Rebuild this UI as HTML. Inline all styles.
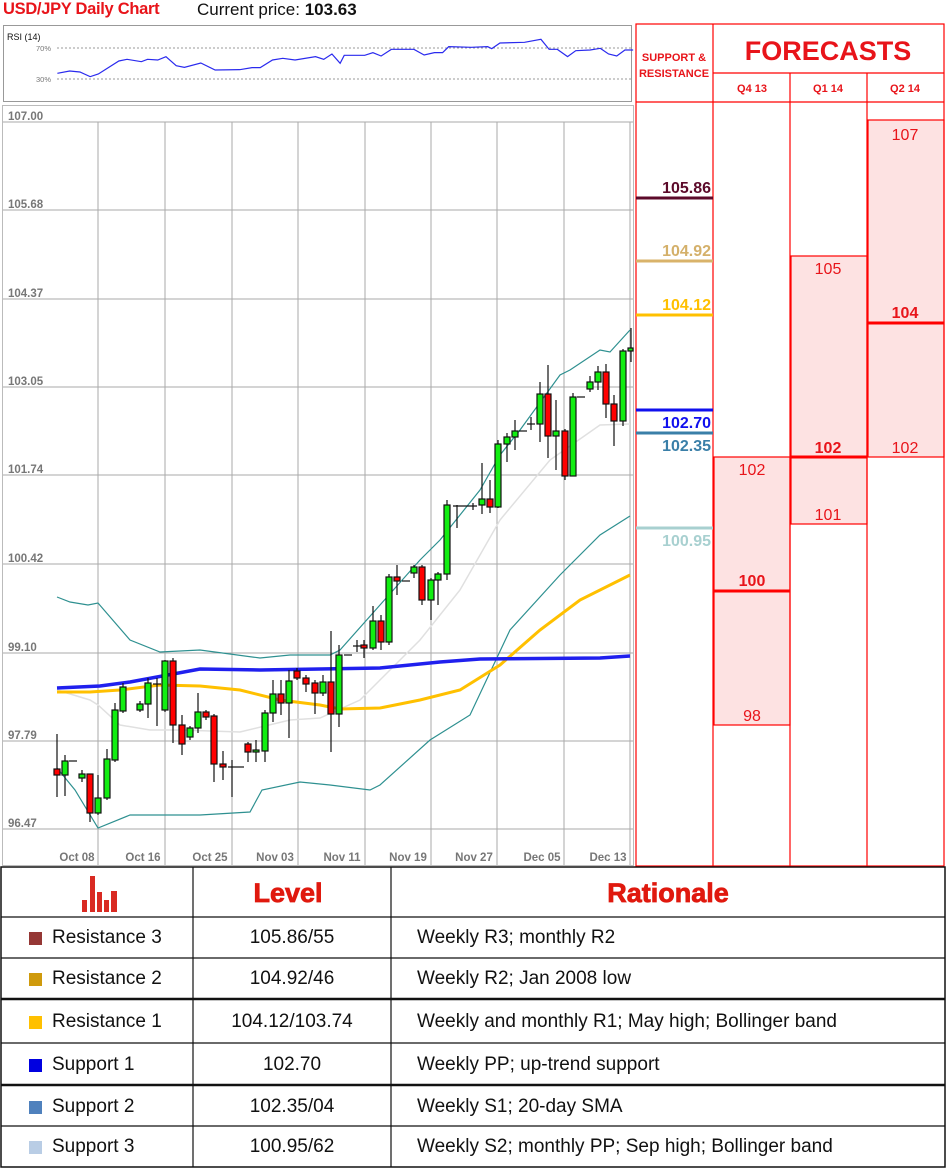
<!DOCTYPE html>
<html><head><meta charset="utf-8"><style>
html,body{margin:0;padding:0;background:#fff;width:949px;height:1169px;overflow:hidden;font-family:"Liberation Sans",sans-serif}
.a{position:absolute}
.t{position:absolute;font-size:19px;color:#111;white-space:nowrap}
.sq{position:absolute;width:13px;height:13px}
</style></head><body>
<div class="a" style="left:3px;top:0;font-size:16.5px;font-weight:bold;color:#e8141a;letter-spacing:-0.3px">USD/JPY Daily Chart</div>
<div class="a" style="left:197px;top:0;font-size:17px;color:#111">Current price: <b>103.63</b></div>

<svg class="a" style="left:0;top:0" width="949" height="870" xmlns="http://www.w3.org/2000/svg" font-family="Liberation Sans, sans-serif">
<!-- RSI -->
<rect x="3.5" y="25.5" width="628" height="76" fill="#fff" stroke="#999"/>
<text x="7" y="40" font-size="9" fill="#111">RSI (14)</text>
<text x="36" y="51" font-size="7.5" fill="#777">70%</text>
<text x="36" y="82" font-size="7.5" fill="#777">30%</text>
<line x1="57" y1="48" x2="631" y2="48" stroke="#777" stroke-dasharray="2,2" stroke-width="0.8"/>
<line x1="57" y1="79" x2="631" y2="79" stroke="#777" stroke-dasharray="2,2" stroke-width="0.8"/>
<g transform="scale(0.4098,0.3333)"><polyline fill="none" stroke="#2a2aee" stroke-width="1.2" vector-effect="non-scaling-stroke" points="140,220 170,213 195,216 220,230 240,222 290,183 310,178 345,185 360,178 385,180 405,170 430,197 450,202 490,189 525,210 585,209 615,203 635,203 665,180 690,175 720,180 770,170 790,178 810,162 830,190 840,166 890,166 910,158 930,168 955,148 1010,148 1035,165 1060,158 1080,158 1095,140 1150,142 1190,140 1200,146 1220,129 1280,127 1320,118 1340,148 1360,148 1385,170 1405,152 1440,150 1465,145 1485,162 1505,168 1525,150 1545,150"/></g>

<!-- main chart -->
<rect x="2.5" y="105.5" width="631" height="760" fill="#fff" stroke="#bbb"/>
<g stroke="#aaa" stroke-width="1">
<line x1="3" y1="122" x2="633" y2="122"/><line x1="3" y1="210" x2="633" y2="210"/><line x1="3" y1="299" x2="633" y2="299"/><line x1="3" y1="387" x2="633" y2="387"/><line x1="3" y1="475" x2="633" y2="475"/><line x1="3" y1="564" x2="633" y2="564"/><line x1="3" y1="653" x2="633" y2="653"/><line x1="3" y1="741" x2="633" y2="741"/><line x1="3" y1="829" x2="633" y2="829"/>
<line x1="98" y1="122" x2="98" y2="865"/><line x1="165" y1="122" x2="165" y2="865"/><line x1="232" y1="122" x2="232" y2="865"/><line x1="298" y1="122" x2="298" y2="865"/><line x1="365" y1="122" x2="365" y2="865"/><line x1="431" y1="122" x2="431" y2="865"/><line x1="497" y1="122" x2="497" y2="865"/><line x1="564" y1="122" x2="564" y2="865"/><line x1="630" y1="122" x2="630" y2="865"/>
</g>
<g font-size="11.5" font-weight="bold" fill="#777">
<text x="8" y="120">107.00</text><text x="8" y="208">105.68</text><text x="8" y="297">104.37</text><text x="8" y="385">103.05</text><text x="8" y="473">101.74</text><text x="8" y="562">100.42</text><text x="8" y="651">99.10</text><text x="8" y="739">97.79</text><text x="8" y="827">96.47</text>
</g>
<g font-size="11.5" font-weight="bold" fill="#777" text-anchor="middle">
<text x="77" y="861">Oct 08</text><text x="143" y="861">Oct 16</text><text x="210" y="861">Oct 25</text><text x="275" y="861">Nov 03</text><text x="342" y="861">Nov 11</text><text x="408" y="861">Nov 19</text><text x="474" y="861">Nov 27</text><text x="542" y="861">Dec 05</text><text x="608" y="861">Dec 13</text>
</g>
<!-- indicators -->
<polyline fill="none" stroke="#e0e0e0" stroke-width="1.5" points="57,690 90,700 98,705 120,725 150,730 180,730 240,732 290,720 320,718 360,700 380,680 420,640 460,590 500,520 550,460 600,425 630,424"/>
<polyline fill="none" stroke="#2e9090" stroke-width="1.2" points="57,597 70,602 88,605 98,603 130,640 160,652 200,650 260,658 290,655 330,655 340,650 380,605 420,560 440,540 480,490 500,455 520,430 560,375 570,370 600,350 610,352 630,330"/>
<polyline fill="none" stroke="#2e9090" stroke-width="1.2" points="57,768 75,790 98,828 130,815 200,815 250,812 262,790 300,782 330,785 370,790 380,785 430,740 470,715 510,630 560,575 600,535 630,516"/>
<polyline fill="none" stroke="#ffc000" stroke-width="3" points="57,692 90,692 120,690 160,685 200,686 240,690 280,700 320,705 340,709 380,708 420,700 460,690 500,665 540,630 580,600 630,575"/>
<polyline fill="none" stroke="#2020ee" stroke-width="3.5" points="57,688 100,686 130,682 200,669 260,670 320,669 380,668 440,662 480,659 600,658 630,656"/>
<!-- candles -->
<g stroke="#111" stroke-width="1.2">
<line x1="57" y1="734" x2="57" y2="797"/><rect x="54" y="769" width="6" height="6" fill="#f00"/>
<line x1="65" y1="755" x2="65" y2="796"/><rect x="62" y="761" width="6" height="14" fill="#1e1"/>
<line x1="69" y1="761" x2="77" y2="761"/>
<line x1="82" y1="770" x2="82" y2="782"/><rect x="79" y="774" width="6" height="4" fill="#1e1"/>
<line x1="90" y1="774" x2="90" y2="822"/><rect x="87" y="774" width="6" height="39" fill="#f00"/>
<line x1="98" y1="775" x2="98" y2="815"/><rect x="95" y="798" width="6" height="15" fill="#1e1"/>
<line x1="107" y1="749" x2="107" y2="800"/><rect x="104" y="759" width="6" height="39" fill="#1e1"/>
<line x1="115" y1="703" x2="115" y2="762"/><rect x="112" y="710" width="6" height="50" fill="#1e1"/>
<line x1="123" y1="683" x2="123" y2="713"/><rect x="120" y="687" width="6" height="24" fill="#1e1"/>
<line x1="140" y1="701" x2="140" y2="712"/><rect x="137" y="704" width="6" height="6" fill="#1e1"/>
<line x1="148" y1="678" x2="148" y2="718"/><rect x="145" y="683" width="6" height="21" fill="#1e1"/>
<line x1="157" y1="678" x2="157" y2="726"/><line x1="153" y1="684" x2="161" y2="684"/>
<line x1="165" y1="660" x2="165" y2="712"/><rect x="162" y="661" width="6" height="49" fill="#1e1"/>
<line x1="173" y1="658" x2="173" y2="743"/><rect x="170" y="661" width="6" height="64" fill="#f00"/>
<line x1="182" y1="715" x2="182" y2="755"/><rect x="179" y="725" width="6" height="19" fill="#f00"/>
<line x1="190" y1="726" x2="190" y2="740"/><rect x="187" y="728" width="6" height="9" fill="#1e1"/>
<line x1="198" y1="693" x2="198" y2="733"/><rect x="195" y="712" width="6" height="16" fill="#1e1"/>
<line x1="206" y1="710" x2="206" y2="720"/><rect x="203" y="712" width="6" height="5" fill="#f00"/>
<line x1="214" y1="714" x2="214" y2="782"/><rect x="211" y="716" width="6" height="48" fill="#f00"/>
<line x1="223" y1="751" x2="223" y2="780"/><rect x="220" y="764" width="6" height="3" fill="#f00"/>
<line x1="232" y1="760" x2="232" y2="797"/><line x1="228" y1="767" x2="236" y2="767"/>
<line x1="236" y1="767" x2="244" y2="767"/>
<line x1="248" y1="742" x2="248" y2="762"/><rect x="245" y="744" width="6" height="8" fill="#f00"/>
<line x1="256" y1="740" x2="256" y2="762"/><rect x="253" y="750" width="6" height="2" fill="#1e1"/>
<line x1="265" y1="710" x2="265" y2="762"/><rect x="262" y="713" width="6" height="38" fill="#1e1"/>
<line x1="273" y1="680" x2="273" y2="722"/><rect x="270" y="694" width="6" height="19" fill="#1e1"/>
<line x1="281" y1="680" x2="281" y2="715"/><rect x="278" y="694" width="6" height="9" fill="#f00"/>
<line x1="289" y1="670" x2="289" y2="738"/><rect x="286" y="681" width="6" height="22" fill="#1e1"/>
<line x1="297" y1="668" x2="297" y2="680"/><rect x="294" y="671" width="6" height="7" fill="#f00"/>
<line x1="306" y1="675" x2="306" y2="692"/><rect x="303" y="678" width="6" height="6" fill="#f00"/>
<line x1="315" y1="680" x2="315" y2="714"/><rect x="312" y="683" width="6" height="10" fill="#f00"/>
<line x1="323" y1="675" x2="323" y2="696"/><rect x="320" y="682" width="6" height="11" fill="#1e1"/>
<line x1="331" y1="631" x2="331" y2="752"/><rect x="328" y="682" width="6" height="32" fill="#f00"/>
<line x1="339" y1="645" x2="339" y2="727"/><rect x="336" y="655" width="6" height="59" fill="#1e1"/>
<line x1="344" y1="655" x2="352" y2="655"/>
<line x1="357" y1="640" x2="357" y2="652"/><line x1="353" y1="646" x2="361" y2="646"/>
<line x1="364" y1="640" x2="364" y2="658"/><rect x="361" y="645" width="6" height="3" fill="#f00"/>
<line x1="373" y1="606" x2="373" y2="650"/><rect x="370" y="621" width="6" height="27" fill="#1e1"/>
<line x1="381" y1="615" x2="381" y2="650"/><rect x="378" y="621" width="6" height="21" fill="#f00"/>
<line x1="389" y1="574" x2="389" y2="645"/><rect x="386" y="577" width="6" height="65" fill="#1e1"/>
<line x1="397" y1="565" x2="397" y2="595"/><rect x="394" y="577" width="6" height="4" fill="#f00"/>
<line x1="402" y1="581" x2="410" y2="581"/>
<line x1="414" y1="565" x2="414" y2="578"/><rect x="411" y="567" width="6" height="6" fill="#1e1"/>
<line x1="422" y1="565" x2="422" y2="605"/><rect x="419" y="567" width="6" height="33" fill="#f00"/>
<line x1="431" y1="578" x2="431" y2="620"/><rect x="428" y="580" width="6" height="20" fill="#1e1"/>
<line x1="438" y1="572" x2="438" y2="605"/><rect x="435" y="574" width="6" height="6" fill="#1e1"/>
<line x1="447" y1="500" x2="447" y2="580"/><rect x="444" y="505" width="6" height="69" fill="#1e1"/>
<line x1="457" y1="505" x2="457" y2="528"/><line x1="453" y1="506" x2="477" y2="506"/>
<line x1="473" y1="503" x2="473" y2="510"/>
<line x1="482" y1="463" x2="482" y2="514"/><rect x="479" y="499" width="6" height="6" fill="#1e1"/>
<line x1="490" y1="480" x2="490" y2="513"/><rect x="487" y="499" width="6" height="8" fill="#f00"/>
<line x1="498" y1="440" x2="498" y2="508"/><rect x="495" y="444" width="6" height="63" fill="#1e1"/>
<line x1="507" y1="433" x2="507" y2="462"/><rect x="504" y="437" width="6" height="7" fill="#1e1"/>
<line x1="515" y1="420" x2="515" y2="450"/><rect x="512" y="431" width="6" height="6" fill="#1e1"/>
<line x1="519" y1="431" x2="527" y2="431"/>
<line x1="531" y1="417" x2="531" y2="430"/><line x1="527" y1="424" x2="535" y2="424"/>
<line x1="540" y1="382" x2="540" y2="442"/><rect x="537" y="394" width="6" height="30" fill="#1e1"/>
<line x1="548" y1="365" x2="548" y2="458"/><rect x="545" y="394" width="6" height="42" fill="#f00"/>
<line x1="556" y1="400" x2="556" y2="470"/><rect x="553" y="431" width="6" height="5" fill="#1e1"/>
<line x1="565" y1="429" x2="565" y2="480"/><rect x="562" y="431" width="6" height="45" fill="#f00"/>
<line x1="573" y1="393" x2="573" y2="476"/><rect x="570" y="397" width="6" height="79" fill="#1e1"/>
<line x1="577" y1="397" x2="585" y2="397"/>
<line x1="590" y1="376" x2="590" y2="392"/><rect x="587" y="382" width="6" height="7" fill="#1e1"/>
<line x1="598" y1="366" x2="598" y2="390"/><rect x="595" y="372" width="6" height="10" fill="#1e1"/>
<line x1="606" y1="364" x2="606" y2="418"/><rect x="603" y="372" width="6" height="32" fill="#f00"/>
<line x1="614" y1="395" x2="614" y2="446"/><rect x="611" y="404" width="6" height="17" fill="#f00"/>
<line x1="623" y1="349" x2="623" y2="426"/><rect x="620" y="351" width="6" height="70" fill="#1e1"/>
<line x1="631" y1="328" x2="631" y2="362"/><rect x="628" y="348" width="5" height="3" fill="#1e1"/>
</g>

<!-- forecast panel -->
<rect x="714" y="457" width="76" height="268" fill="#fde2e2"/>
<rect x="791" y="256" width="76" height="268" fill="#fde2e2"/>
<rect x="868" y="120" width="76" height="337" fill="#fde2e2"/>
<g stroke="#f00" stroke-width="1.2" fill="none">
<rect x="636" y="24" width="308" height="842"/>
<line x1="636" y1="102" x2="944" y2="102"/>
<line x1="713" y1="24" x2="713" y2="866"/>
<line x1="713" y1="73" x2="944" y2="73"/>
<line x1="790" y1="73" x2="790" y2="866"/>
<line x1="867" y1="73" x2="867" y2="866"/>
<rect x="714" y="457" width="76" height="268"/>
<rect x="791" y="256" width="76" height="268"/>
<rect x="868" y="120" width="76" height="337"/>
</g>
<g stroke="#f00" stroke-width="3">
<line x1="714" y1="591" x2="790" y2="591"/>
<line x1="791" y1="457" x2="867" y2="457"/>
<line x1="868" y1="323" x2="944" y2="323"/>
</g>
<g font-weight="bold" fill="#e8141a" text-anchor="middle">
<text x="674" y="61" font-size="11">SUPPORT &amp;</text>
<text x="674" y="77" font-size="11">RESISTANCE</text>
<text x="828" y="60" font-size="27">FORECASTS</text>
<text x="752" y="92" font-size="11">Q4 13</text>
<text x="828" y="92" font-size="11">Q1 14</text>
<text x="905" y="92" font-size="11">Q2 14</text>
</g>
<g font-size="16" fill="#e8141a" text-anchor="middle">
<text x="752" y="475">102</text>
<text x="752" y="586" font-weight="bold">100</text>
<text x="752" y="721">98</text>
<text x="828" y="274">105</text>
<text x="828" y="453" font-weight="bold">102</text>
<text x="828" y="520">101</text>
<text x="905" y="140">107</text>
<text x="905" y="318" font-weight="bold">104</text>
<text x="905" y="453">102</text>
</g>
<g stroke-width="3">
<line x1="636" y1="198" x2="713" y2="198" stroke="#5c0a2a"/>
<line x1="636" y1="261" x2="713" y2="261" stroke="#d9b36a"/>
<line x1="636" y1="315" x2="713" y2="315" stroke="#ffc000"/>
<line x1="636" y1="410" x2="713" y2="410" stroke="#1010ee"/>
<line x1="636" y1="433" x2="713" y2="433" stroke="#3a7fa8"/>
<line x1="636" y1="528" x2="713" y2="528" stroke="#a8d0d0"/>
</g>
<g font-size="16" font-weight="bold" text-anchor="end">
<text x="711" y="193" fill="#5c0a2a">105.86</text>
<text x="711" y="256" fill="#d4b06a">104.92</text>
<text x="711" y="310" fill="#ffc000">104.12</text>
<text x="711" y="428" fill="#1010ee">102.70</text>
<text x="711" y="451" fill="#3a7fa8">102.35</text>
<text x="711" y="546" fill="#a8d0d0">100.95</text>
</g>
</svg>

<!-- table -->
<svg class="a" style="left:0;top:866px" width="949" height="303">
<rect x="1" y="1" width="944" height="300" fill="#fff" stroke="#111" stroke-width="1.5"/>
<g stroke="#111" stroke-width="1.2">
<line x1="193" y1="1" x2="193" y2="301"/><line x1="391" y1="1" x2="391" y2="301"/>
<line x1="1" y1="51" x2="945" y2="51"/><line x1="1" y1="92" x2="945" y2="92"/>
<line x1="1" y1="177" x2="945" y2="177"/>
<line x1="1" y1="260" x2="945" y2="260"/>
</g>
<g stroke="#111" stroke-width="2.5">
<line x1="1" y1="133" x2="945" y2="133"/><line x1="1" y1="219" x2="945" y2="219"/>
</g>
<g fill="#d92a22">
<rect x="82" y="34" width="5" height="12"/><rect x="90" y="10" width="5" height="36"/><rect x="97" y="26" width="5" height="20"/><rect x="104" y="34" width="5" height="12"/><rect x="111" y="25" width="6" height="21"/>
</g>
<text x="288" y="36" text-anchor="middle" font-family="Liberation Sans, sans-serif" font-weight="bold" font-size="27" fill="#e0190e" stroke="#e0190e" stroke-width="0.8">Level</text>
<text x="668" y="36" text-anchor="middle" font-family="Liberation Sans, sans-serif" font-weight="bold" font-size="27" fill="#e0190e" stroke="#e0190e" stroke-width="0.8">Rationale</text>
</svg>

<div class="sq" style="left:29px;top:932px;background:#953735"></div>
<div class="sq" style="left:29px;top:973px;background:#cf9a0c"></div>
<div class="sq" style="left:29px;top:1016px;background:#ffc000"></div>
<div class="sq" style="left:29px;top:1059px;background:#0000e0"></div>
<div class="sq" style="left:29px;top:1101px;background:#4f81bd"></div>
<div class="sq" style="left:29px;top:1141px;background:#b9cde5"></div>

<div class="t" style="left:52px;top:927px">Resistance 3</div>
<div class="t" style="left:52px;top:968px">Resistance 2</div>
<div class="t" style="left:52px;top:1011px">Resistance 1</div>
<div class="t" style="left:52px;top:1054px">Support 1</div>
<div class="t" style="left:52px;top:1096px">Support 2</div>
<div class="t" style="left:52px;top:1136px">Support 3</div>

<div class="t" style="left:193px;width:198px;text-align:center;top:927px">105.86/55</div>
<div class="t" style="left:193px;width:198px;text-align:center;top:968px">104.92/46</div>
<div class="t" style="left:193px;width:198px;text-align:center;top:1011px">104.12/103.74</div>
<div class="t" style="left:193px;width:198px;text-align:center;top:1054px">102.70</div>
<div class="t" style="left:193px;width:198px;text-align:center;top:1096px">102.35/04</div>
<div class="t" style="left:193px;width:198px;text-align:center;top:1136px">100.95/62</div>

<div class="t" style="left:417px;top:927px">Weekly R3; monthly R2</div>
<div class="t" style="left:417px;top:968px">Weekly R2; Jan 2008 low</div>
<div class="t" style="left:417px;top:1011px">Weekly and monthly R1; May high; Bollinger band</div>
<div class="t" style="left:417px;top:1054px">Weekly PP; up-trend support</div>
<div class="t" style="left:417px;top:1096px">Weekly S1; 20-day SMA</div>
<div class="t" style="left:417px;top:1136px">Weekly S2; monthly PP; Sep high; Bollinger band</div>
</body></html>
